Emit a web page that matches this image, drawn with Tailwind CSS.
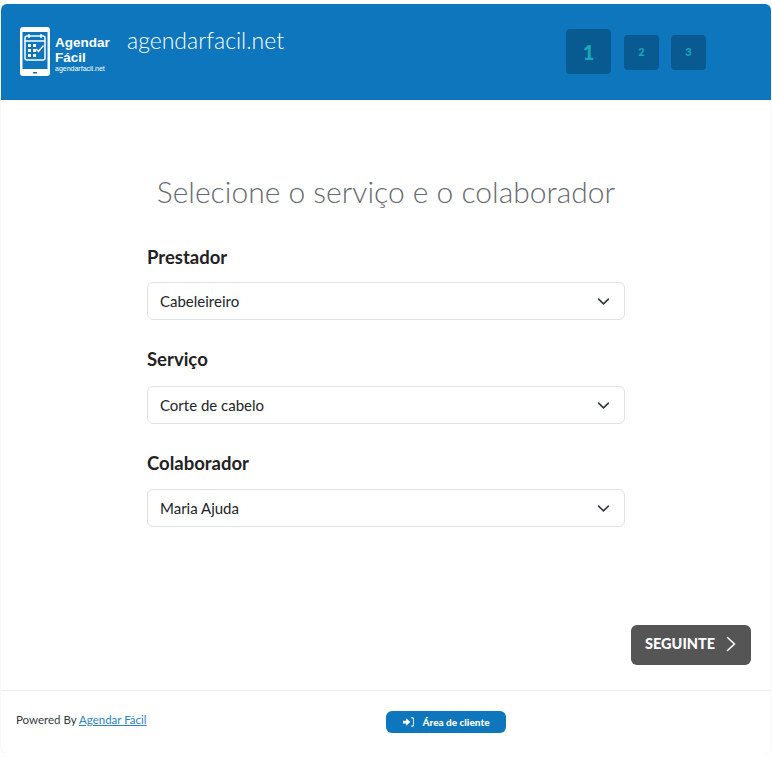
<!DOCTYPE html>
<html lang="pt">
<head>
    <meta charset="UTF-8">
    <meta name="viewport" content="width=device-width, initial-scale=1.0">
    <title>Agendar Fácil</title>
    <script src="https://cdn.jsdelivr.net/npm/@tailwindcss/browser@4"></script>
</head>
<body class="bg-white font-['Lato','Noto_Sans',sans-serif] text-[#212529]">
    <div class="pt-1 pl-px">
        <div class="w-[770px] h-[749px] flex flex-col rounded-md bg-white shadow-[0_0_3px_rgba(170,190,210,0.3)]">
            <!-- header -->
            <div class="h-[96px] shrink-0 flex bg-[#0e76bc] rounded-t-md">
                <div class="w-[565px] flex">
                    <div class="ml-[18px] mt-[22px] w-[94px] h-[52px] flex gap-[4px] text-white">
                        <svg class="w-[32px] h-[52px] shrink-0" viewBox="0 0 32 52" fill="none">
                            <rect x="1" y="1" width="30" height="49" rx="3" fill="#fff"/>
                            <rect x="3.500" y="6" width="25" height="37" fill="#0e76bc"/>
                            <rect x="14" y="46" width="4" height="1.500" fill="#0e76bc"/>
                            <rect x="6" y="10" width="20" height="24" rx="2" stroke="#fff" stroke-width="1.500"/>
                            <path d="M6 15h20" stroke="#fff" stroke-width="1.500"/>
                            <path d="M10 8v4M22 8v4" stroke="#fff" stroke-width="1.500"/>
                            <path d="M9 18h3v3H9zM14 18h3v3h-3zM9 23h3v3H9zM14 23h3v3h-3zM9 28h3v3H9zM14 28h3v3h-3z" fill="#fff"/>
                            <path d="M17 23l2.500 2.500 5-6" stroke="#fff" stroke-width="1.500"/>
                        </svg>
                        <div class="pt-[10px] font-['Liberation_Sans',sans-serif] font-bold">
                            <div class="text-[13.500px] leading-[14px]">Agendar</div>
                            <div class="text-[13.500px] leading-[15px]">Fácil</div>
                            <div class="text-[7px] leading-[8px] font-normal">agendarfacil.net</div>
                        </div>
                    </div>
                    <div class="ml-[14px] mt-[19px] text-[23px] leading-[34px] font-light text-white">agendarfacil.net</div>
                </div>
                <div class="flex items-start pt-[25px]">
                    <div class="w-[45px] h-[45px] flex items-center justify-center rounded bg-[#0a5a92] text-[#17a9b8] text-[20px] font-black">1</div>
                    <div class="ml-[13px] mt-[6px] w-[35px] h-[35px] flex items-center justify-center rounded bg-[#0a5a92] text-[#17a9b8] text-[11px] font-black">2</div>
                    <div class="ml-[12px] mt-[6px] w-[35px] h-[35px] flex items-center justify-center rounded bg-[#0a5a92] text-[#17a9b8] text-[11px] font-black">3</div>
                </div>
            </div>

            <!-- form -->
            <div class="flex-1 relative">
                <h2 class="pt-[69px] text-center text-[30px] leading-[44px] font-light text-[#666b70]">Selecione o serviço e o colaborador</h2>
                <div class="mt-[30px] ml-[146px] w-[478px] flex flex-col">
                    <label class="h-[28px] text-[18.500px] leading-[28px] font-bold text-[#1f2224]">Prestador</label>
                    <div class="mt-[11px] h-[38px] flex items-center justify-between pl-[12px] pr-[14px] rounded-md border border-[#dee2e6] text-[15px]">
                        <span>Cabeleireiro</span>
                        <svg class="w-[13px] h-[13px]" viewBox="0 0 16 16" fill="none" stroke="#343a40" stroke-width="2" stroke-linecap="round" stroke-linejoin="round"><path d="M2 5l6 6 6-6"/></svg>
                    </div>
                    <label class="mt-[25px] h-[28px] text-[18.500px] leading-[28px] font-bold text-[#1f2224]">Serviço</label>
                    <div class="mt-[13px] h-[38px] flex items-center justify-between pl-[12px] pr-[14px] rounded-md border border-[#dee2e6] text-[15px]">
                        <span>Corte de cabelo</span>
                        <svg class="w-[13px] h-[13px]" viewBox="0 0 16 16" fill="none" stroke="#343a40" stroke-width="2" stroke-linecap="round" stroke-linejoin="round"><path d="M2 5l6 6 6-6"/></svg>
                    </div>
                    <label class="mt-[25px] h-[28px] text-[18.500px] leading-[28px] font-bold text-[#1f2224]">Colaborador</label>
                    <div class="mt-[12px] h-[38px] flex items-center justify-between pl-[12px] pr-[14px] rounded-md border border-[#dee2e6] text-[15px]">
                        <span>Maria Ajuda</span>
                        <svg class="w-[13px] h-[13px]" viewBox="0 0 16 16" fill="none" stroke="#343a40" stroke-width="2" stroke-linecap="round" stroke-linejoin="round"><path d="M2 5l6 6 6-6"/></svg>
                    </div>
                </div>
                <div class="mt-[98px] flex justify-end pr-[20px]">
                    <button class="w-[120px] h-[40px] flex items-center pl-[14px] pb-[2px] gap-[11px] rounded-md bg-[#555555] text-white text-[14.500px] font-black">
                        <span>SEGUINTE</span>
                        <svg class="w-[10px] h-[16px]" viewBox="0 0 10 16" fill="none" stroke="#fff" stroke-width="1.600" stroke-linecap="round" stroke-linejoin="round"><path d="M1.500 1.500l7 6.500-7 6.500"/></svg>
                    </button>
                </div>
            </div>

            <!-- footer -->
            <div class="h-[63px] shrink-0 flex items-start border-t border-[#e9edf2]">
                <div class="ml-[15px] mt-[21px] w-[370px] text-[11.500px] leading-[16px] text-[#343a40]">Powered By <a href="#" class="text-[#2a83c4] underline">Agendar Fácil</a></div>
                <button class="mt-[20px] w-[120px] h-[22px] flex items-center justify-center gap-[9px] rounded-md bg-[#0e76bc] text-white text-[10px] font-black">
                    <svg class="w-[11px] h-[10px]" viewBox="0 0 12 10" fill="#fff"><path d="M0 3.500h3.500V1L8 5 3.500 9V6.500H0z"/><path d="M9 .500h1.200c1 0 1.500.6 1.500 1.500v6c0 .9-.5 1.500-1.500 1.500H9" fill="none" stroke="#fff" stroke-width="1.200"/></svg>
                    <span>Área de cliente</span>
                </button>
            </div>
        </div>
    </div>
</body>
</html>
